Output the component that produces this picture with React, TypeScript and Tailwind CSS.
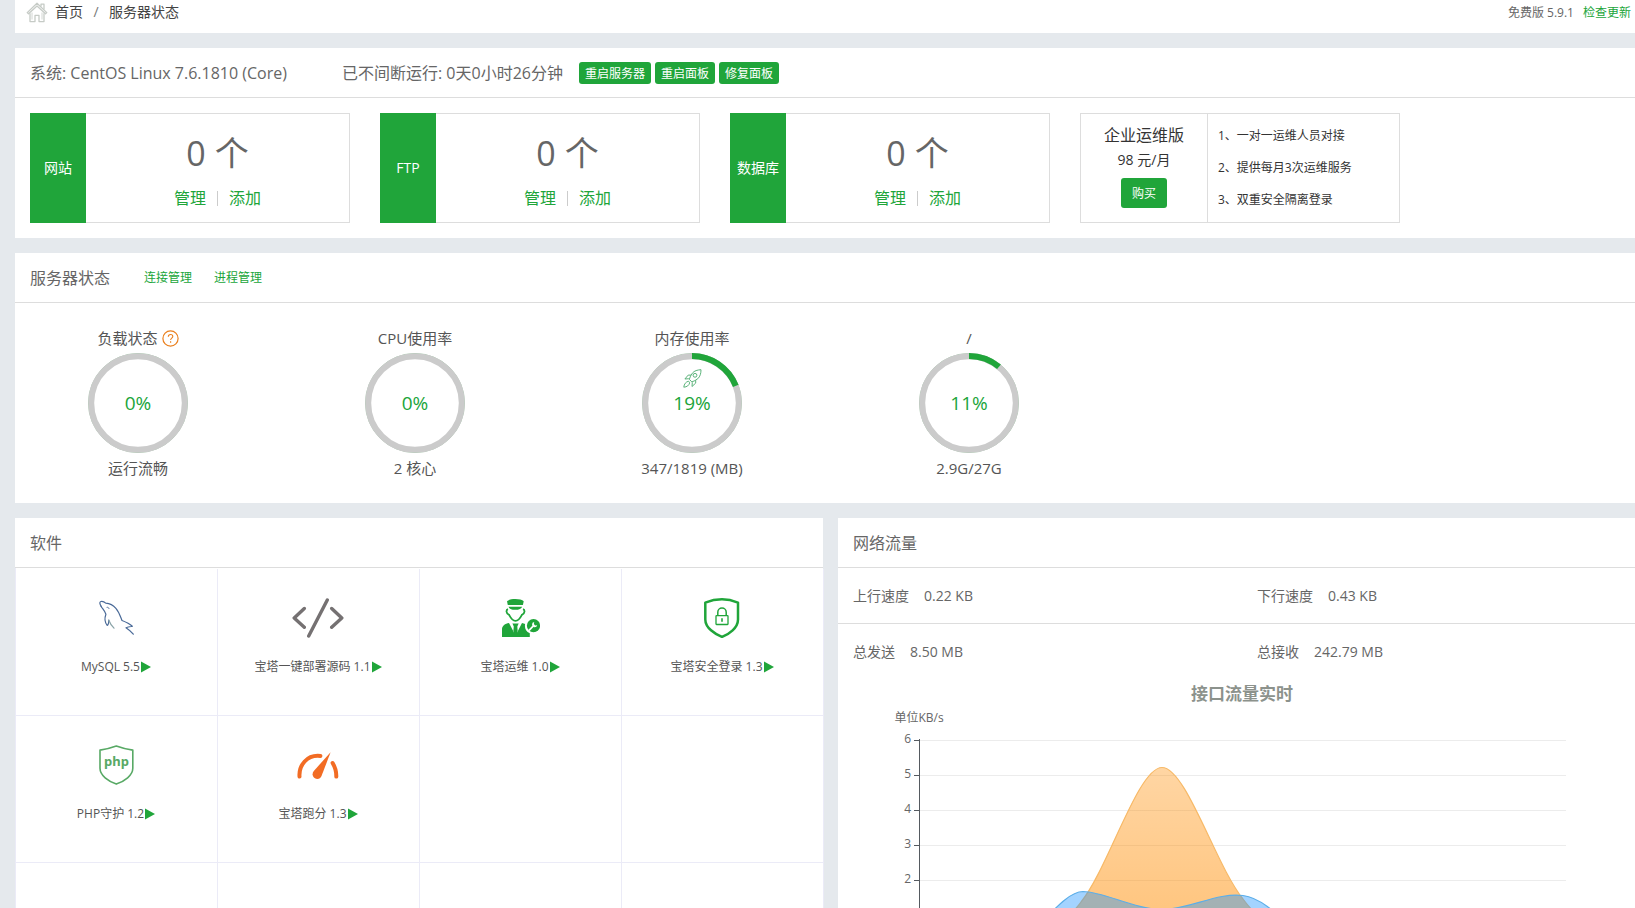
import type { ReactNode } from "react";

function HomeIcon() {
  return (
    <svg width="22" height="22" viewBox="0 0 22 22" fill="none" stroke="#c6cbc6" strokeWidth="1.3" strokeLinejoin="round" aria-hidden="true">
      <path d="M1.2 11.6 11 2.2l9.8 9.4-1.3 1.2L11 4.9l-8.5 7.9z" />
      <path d="M15 5.5V3.2h3v5.2" />
      <path d="M4 12.2v8.4h5v-6.2h4v6.2h5v-8.4" />
      <path d="M6 11.5v7M16 11.5v7" strokeWidth=".8" />
    </svg>
  );
}

function HelpIcon() {
  return (
    <svg width="17" height="17" viewBox="0 0 17 17" fill="none" stroke="#ea7f1c" aria-hidden="true">
      <circle cx="8.5" cy="8.5" r="7.6" strokeWidth="1.2" />
      <path d="M6.3 6.7c0-1.4 1-2.2 2.3-2.2s2.2.8 2.2 2c0 1.6-2.2 1.7-2.2 3.5" strokeWidth="1.1" />
      <path d="M8.6 11.3v1.4" strokeWidth="1.2" />
    </svg>
  );
}

function RocketIcon() {
  return (
    <svg width="19" height="19" viewBox="0 0 19 19" fill="none" stroke="#5cb37b" strokeWidth="1" strokeLinejoin="round" aria-hidden="true">
      <path d="M18 .7c-3.6.2-6.6 1-8.6 3.4C7.900 6 7 8.200 6.300 10.300l2.500 2.600c2.100-.7 4.300-1.700 6-3.200C17.200 7.500 18 4.300 18 .7z" />
      <circle cx="12" cy="6.300" r="1.900" />
      <path d="M8 6.100H5.200L1.900 10l3.900-.3M12.700 11.200v2.900L9 17.500l.3-4.200" />
      <path d="M5.600 12.200C3 12.700 1 15 .8 18.200c3.200-.2 5.200-1.800 5.900-4.400z" />
    </svg>
  );
}

function DolphinIcon() {
  return (
    <svg width="40" height="40" viewBox="0 0 40 40" fill="none" stroke="#4a6a98" strokeWidth="1.200" strokeLinecap="round" strokeLinejoin="round" aria-hidden="true">
      <path d="M5.200 8.400C4 6.500 3 4 4.800 3.500c2-.5 3.600.4 4.900 1.600 3.800.3 7.800 2.400 10.200 5.200 3.200 3.700 4.300 7.700 6.100 12.200 3.600 1.400 7.500 3.200 10.300 5.800-2.200.4-4 .6-6.300 1.500 2.400 1.600 5 3.500 7.300 6.400" />
      <path d="M5.200 8.400c1 2 3.300 4 4.700 7.800-1.400 3.800-1.500 7.700 1.300 11.200 1.500-.5 1.500-2.500 1.600-5.300" />
      <path d="M12.800 22.200c1.200 3.300 3 5.600 5.200 8" stroke="#8aa3a8" />
      <path d="M11 9.300c.9-.3 1.800.2 2 1.300" strokeWidth=".9" />
    </svg>
  );
}

function CodeIcon() {
  return (
    <svg width="52" height="40" viewBox="0 0 52 40" fill="none" stroke="#757172" strokeWidth="3.400" strokeLinecap="round" strokeLinejoin="round" aria-hidden="true">
      <path d="M12.300 10.500 2.200 20l10.100 9.300M39.700 10.500 49.800 20l-10.100 9.300M35.300 2 16.700 38" />
    </svg>
  );
}

function EngineerIcon() {
  return (
    <svg width="40" height="40" viewBox="0 0 40 40" fill="#20a53a" aria-hidden="true">
      <path d="M7 3.200C9.500.4 21.200.4 23.700 3.200L22.900 7H7.800z" />
      <path d="M8.600 8.700h13.500c-.4 2.100-3.200 3.100-6.700 3.100s-6.400-1-6.800-3.100z" />
      <path d="M8 11.200c-2 .5-2.300 4.200 1.100 5.600 1.500 2.900 4 6 6.400 6s4.900-3.100 6.400-6c3.400-1.400 3.100-5.100 1.100-5.600" fill="none" stroke="#20a53a" strokeWidth="1.800" />
      <path d="M2 39v-7.800c0-3.400 3.200-5.600 7-6.200l5 9.600-.2-6.200-1.400-2.800h6.300l-1.400 2.800-.2 6.200 4.900-9.600c1.200.2 2.300.6 3.100 1-.7 3.900.6 7.600 4.700 9.200V39z" />
      <path d="m14.200 26.300h2.600l.8 6.800-2.100 4-2.100-4z" />
      <circle cx="33.500" cy="27.700" r="6.600" />
      <path d="M29.300 32.200l3.600-3.800" stroke="#fff" strokeWidth="1.700" strokeLinecap="round" />
      <path d="M34.200 24.100a2.600 2.600 0 1 0 3 3.100l-2.100.2-1.200-1.300z" fill="#fff" />
    </svg>
  );
}

function LockShieldIcon() {
  return (
    <svg width="40" height="40" viewBox="0 0 40 40" fill="none" stroke="#20a53a" aria-hidden="true">
      <path d="M20 1.300c5 0 10.800 1.200 16 3.300v16.800c0 8.500-9 14.700-16 17.500C13 36.100 3.300 29.900 3.300 21.400V4.600C8.500 2.500 15 1.300 20 1.300z" strokeWidth="2.500" strokeLinejoin="round" />
      <rect x="14" y="17.700" width="12" height="8.800" strokeWidth="1.300" rx=".5" />
      <path d="M15.800 17.500v-3.200a4.200 4.200 0 0 1 8.400 0v3.200" strokeWidth="1.500" />
      <path d="M20 20.200v3.500" strokeWidth="1.600" />
    </svg>
  );
}

function PhpShieldIcon() {
  return (
    <svg width="40" height="40" viewBox="0 0 40 40" aria-hidden="true">
      <path d="M20.300 1.100c5.300 2 10.700 3.300 16.500 4v18.200c0 7.200-8.300 12.900-16.500 15.800C12.300 36.200 4 30.500 4 23.300V5.100c5.800-.7 11-2 16.300-4z" fill="none" stroke="#58a965" strokeWidth="1.600" strokeLinejoin="round" />
      <text x="20.500" y="21" textAnchor="middle" fontFamily="Noto Sans, sans-serif" fontSize="13" fontWeight="700" fill="#58a965">php</text>
    </svg>
  );
}

function GaugeIcon() {
  return (
    <svg width="42" height="40" viewBox="0 0 42 40" aria-hidden="true">
      <path d="M2.500 31.600C1.700 20.500 10 9.300 23.400 10.900" fill="none" stroke="#f26c24" strokeWidth="4" strokeLinecap="round" />
      <path d="M35.600 18c2.200 3.600 3.800 8.500 3.700 13.600" fill="none" stroke="#f26c24" strokeWidth="4" strokeLinecap="round" />
      <path d="M33.600 7.300 24.500 31c-1.300 3.300-4.600 3.600-7 1.900-2.300-1.800-2.500-4.700-.7-7z" fill="#f26c24" />
    </svg>
  );
}

const counters = [
  { label: "网站", value: 0 },
  { label: "FTP", value: 0 },
  { label: "数据库", value: 0 },
];

const gauges = [
  { title: "负载状态", percent: 0, note: "运行流畅", help: true },
  { title: "CPU使用率", percent: 0, note: "2 核心" },
  { title: "内存使用率", percent: 19, note: "347/1819 (MB)", boost: true },
  { title: "/", percent: 11, note: "2.9G/27G" },
];

const software: { name: string; icon: ReactNode }[] = [
  { name: "MySQL 5.5", icon: <DolphinIcon /> },
  { name: "宝塔一键部署源码 1.1", icon: <CodeIcon /> },
  { name: "宝塔运维 1.0", icon: <EngineerIcon /> },
  { name: "宝塔安全登录 1.3", icon: <LockShieldIcon /> },
  { name: "PHP守护 1.2", icon: <PhpShieldIcon /> },
  { name: "宝塔跑分 1.3", icon: <GaugeIcon /> },
];
const blanks = [0, 1, 2, 3, 4, 5];

const traffic = [
  [
    { label: "上行速度", value: "0.22 KB" },
    { label: "下行速度", value: "0.43 KB" },
  ],
  [
    { label: "总发送", value: "8.50 MB" },
    { label: "总接收", value: "242.79 MB" },
  ],
];

function Ring({ percent }: { percent: number }) {
  const length = 2 * Math.PI * 47;
  return (
    <svg width="100" height="100" viewBox="0 0 100 100" fill="none" aria-hidden="true">
      <circle cx="50" cy="50" r="49.500" stroke="#9fcaa6" />
      <circle cx="50" cy="50" r="46.800" stroke="#cbcbcb" strokeWidth="6" />
      {percent > 0 && (
        <circle
          cx="50"
          cy="50"
          r="47"
          stroke="#20a53a"
          strokeWidth="6"
          strokeDasharray={`${(length * percent) / 100} ${length}`}
          transform="rotate(-90 50 50)"
        />
      )}
    </svg>
  );
}

function PanelHeader({ children }: { children: ReactNode }) {
  return <div className="flex h-[50px] items-center border-b border-[#ddd] px-[15px] text-base text-[#666]">{children}</div>;
}

function TrafficChart() {
  const ticks = [6, 5, 4, 3, 2];
  return (
    <svg className="w-full" viewBox="0 0 808 320" role="img" aria-label="接口流量实时">
      <defs>
        <linearGradient id="down" x1="0" y1="88" x2="0" y2="272" gradientUnits="userSpaceOnUse">
          <stop offset="0" stopColor="#ff8c00" stopOpacity=".36" />
          <stop offset="1" stopColor="#ff8c00" stopOpacity=".54" />
        </linearGradient>
      </defs>
      <text x="404" y="20" textAnchor="middle" fontSize="17" fontWeight="700" fill="#8c928c">接口流量实时</text>
      <text x="81" y="42" textAnchor="middle" fontSize="12" fill="#666">单位KB/s</text>
      {ticks.map((tick, i) => (
        <g key={tick}>
          <path d={`M82 ${60.5 + i * 35}H728`} stroke="#ececec" />
          <path d={`M76 ${60.5 + i * 35}h5`} stroke="#555a60" />
          <text x="73" y={63 + i * 35} textAnchor="end" fontSize="12" fill="#666">{tick}</text>
        </g>
      ))}
      <path d="M81.500 59v212" stroke="#555a60" />
      <path d="M162 272C190 272 225 246 243 222 270 189 300 87.500 324 87.500S378 186 405 219C423 243 458 272 486 272z" fill="url(#down)" />
      <path d="M162 272C190 272 225 246 243 222 270 189 300 87.500 324 87.500S378 186 405 219C423 243 458 272 486 272" fill="none" stroke="#f7b967" strokeWidth="1.200" />
      <path d="M162 272C194 265 221 212 245 211.500 267 212 297 229.500 324 229.500S380 212 405 215.500C434 219 461 262 486 272z" fill="rgba(25,145,255,.4)" />
      <path d="M162 272C194 265 221 212 245 211.500 267 212 297 229.500 324 229.500S380 212 405 215.500C434 219 461 262 486 272" fill="none" stroke="#5caee8" strokeWidth="1.200" />
    </svg>
  );
}

export default function App() {
  return (
    <div className="h-screen overflow-hidden bg-[#e5e9ed] pl-[15px] font-['Open_Sans','Noto_Sans_CJK_SC',sans-serif] text-[#555]">
      <header className="flex h-[33px] items-start justify-between bg-white pr-1 pl-[11px]">
        <nav className="flex h-6 items-center text-sm leading-6 text-[#444]">
          <HomeIcon />
          <a href="#home" className="ml-[7px]">首页</a>
          <span className="w-[26px] text-center text-[#777]">/</span>
          <a href="#status">服务器状态</a>
        </nav>
        <div className="flex gap-[9px] text-xs leading-[26px] text-[#666]">
          <span>免费版 5.9.1</span>
          <a href="#update" className="text-[#20a53a]">检查更新</a>
        </div>
      </header>

      <section className="mt-[15px] bg-white">
        <PanelHeader>
          <span className="w-[312px]">系统: CentOS Linux 7.6.1810 (Core)</span>
          <span className="mr-4">已不间断运行: 0天0小时26分钟</span>
          <div className="flex gap-1 text-xs leading-[21px] text-white">
            <button type="button" className="w-[72px] rounded-[3px] bg-[#20a53a] pt-px">重启服务器</button>
            <button type="button" className="w-[60px] rounded-[3px] bg-[#20a53a] pt-px">重启面板</button>
            <button type="button" className="w-[60px] rounded-[3px] bg-[#20a53a] pt-px">修复面板</button>
          </div>
        </PanelHeader>
        <div className="flex gap-[30px] p-[15px]">
          {counters.map((c) => (
            <div key={c.label} className="flex h-[110px] w-[320px]">
              <div className="flex w-14 items-center justify-center bg-[#20a53a] text-sm text-white">{c.label}</div>
              <div className="flex-1 border border-l-0 border-[#ddd] pt-[15px] text-center">
                <div className="text-[34px] leading-12 text-[#666]">{c.value} 个</div>
                <div className="flex items-center justify-center gap-[11px] pt-[9px] text-base leading-6 text-[#20a53a]">
                  <a href="#manage">管理</a>
                  <span className="h-[15px] w-px bg-[#ccc]" />
                  <a href="#add">添加</a>
                </div>
              </div>
            </div>
          ))}
          <div className="flex h-[110px] w-[320px] border border-[#ddd] text-[#333]">
            <div className="flex w-[127px] flex-col items-center border-r border-[#ddd] pt-[9px]">
              <span className="text-base leading-6">企业运维版</span>
              <span className="text-sm leading-[26px]">98 元/月</span>
              <button type="button" className="mt-[5px] h-[30px] w-[46px] rounded-[3px] bg-[#20a53a] pt-px text-xs text-white">购买</button>
            </div>
            <ul className="pt-[6px] pl-[10px] text-xs leading-8">
              <li>1、一对一运维人员对接</li>
              <li>2、提供每月3次运维服务</li>
              <li>3、双重安全隔离登录</li>
            </ul>
          </div>
        </div>
      </section>

      <section className="mt-[15px] bg-white">
        <PanelHeader>
          <h2>服务器状态</h2>
          <a href="#connections" className="ml-[34px] pt-px text-xs text-[#20a53a]">连接管理</a>
          <a href="#processes" className="ml-[22px] pt-px text-xs text-[#20a53a]">进程管理</a>
        </PanelHeader>
        <ul className="flex h-[200px] gap-[61px] px-[15px] pt-6">
          {gauges.map((g) => (
            <li key={g.title} className="flex w-[216px] flex-col items-center text-[15px] leading-[22px]">
              <div className="flex items-center gap-1">
                <span>{g.title}</span>
                {g.help && <HelpIcon />}
              </div>
              <div className="relative mt-1 h-[100px] w-[100px]">
                <Ring percent={g.percent} />
                {g.boost && (
                  <span className="absolute top-4 left-[41px]">
                    <RocketIcon />
                  </span>
                )}
                <span className="absolute inset-0 flex items-center justify-center text-[19px] text-[#20a53a]">{g.percent}%</span>
              </div>
              <span className="mt-1">{g.note}</span>
            </li>
          ))}
        </ul>
      </section>

      <div className="mt-[15px] -mr-[11px] grid grid-cols-2 gap-[15px]">
        <section className="bg-white">
          <PanelHeader>
            <h2>软件</h2>
          </PanelHeader>
          <div className="-mr-px grid grid-cols-4 border-l border-[#ebebf7] pt-px">
            {software.map((s) => (
              <div key={s.name} className="flex h-[147px] flex-col items-center border-r border-b border-[#ebebf7] pt-[29px] pr-px">
                {s.icon}
                <div className="mt-[19px] flex items-center gap-px text-xs leading-5">
                  <span>{s.name}</span>
                  <svg width="10" height="12" viewBox="0 0 10 12" aria-hidden="true">
                    <path d="M0 .5 10 6 0 11.500z" fill="#20a53a" />
                  </svg>
                </div>
              </div>
            ))}
            {blanks.map((b) => (
              <div key={b} className="h-[147px] border-r border-b border-[#ebebf7]" />
            ))}
          </div>
        </section>

        <section className="bg-white">
          <PanelHeader>
            <h2>网络流量</h2>
          </PanelHeader>
          {traffic.map((row) => (
            <div key={row[0].label} className="grid h-14 grid-cols-2 items-center border-b border-[#ddd] text-sm text-[#666] last-of-type:border-b-0">
              {row.map((item) => (
                <div key={item.label} className="flex gap-[15px] px-[15px]">
                  <span>{item.label}</span>
                  <span>{item.value}</span>
                </div>
              ))}
            </div>
          ))}
          <TrafficChart />
        </section>
      </div>
    </div>
  );
}
